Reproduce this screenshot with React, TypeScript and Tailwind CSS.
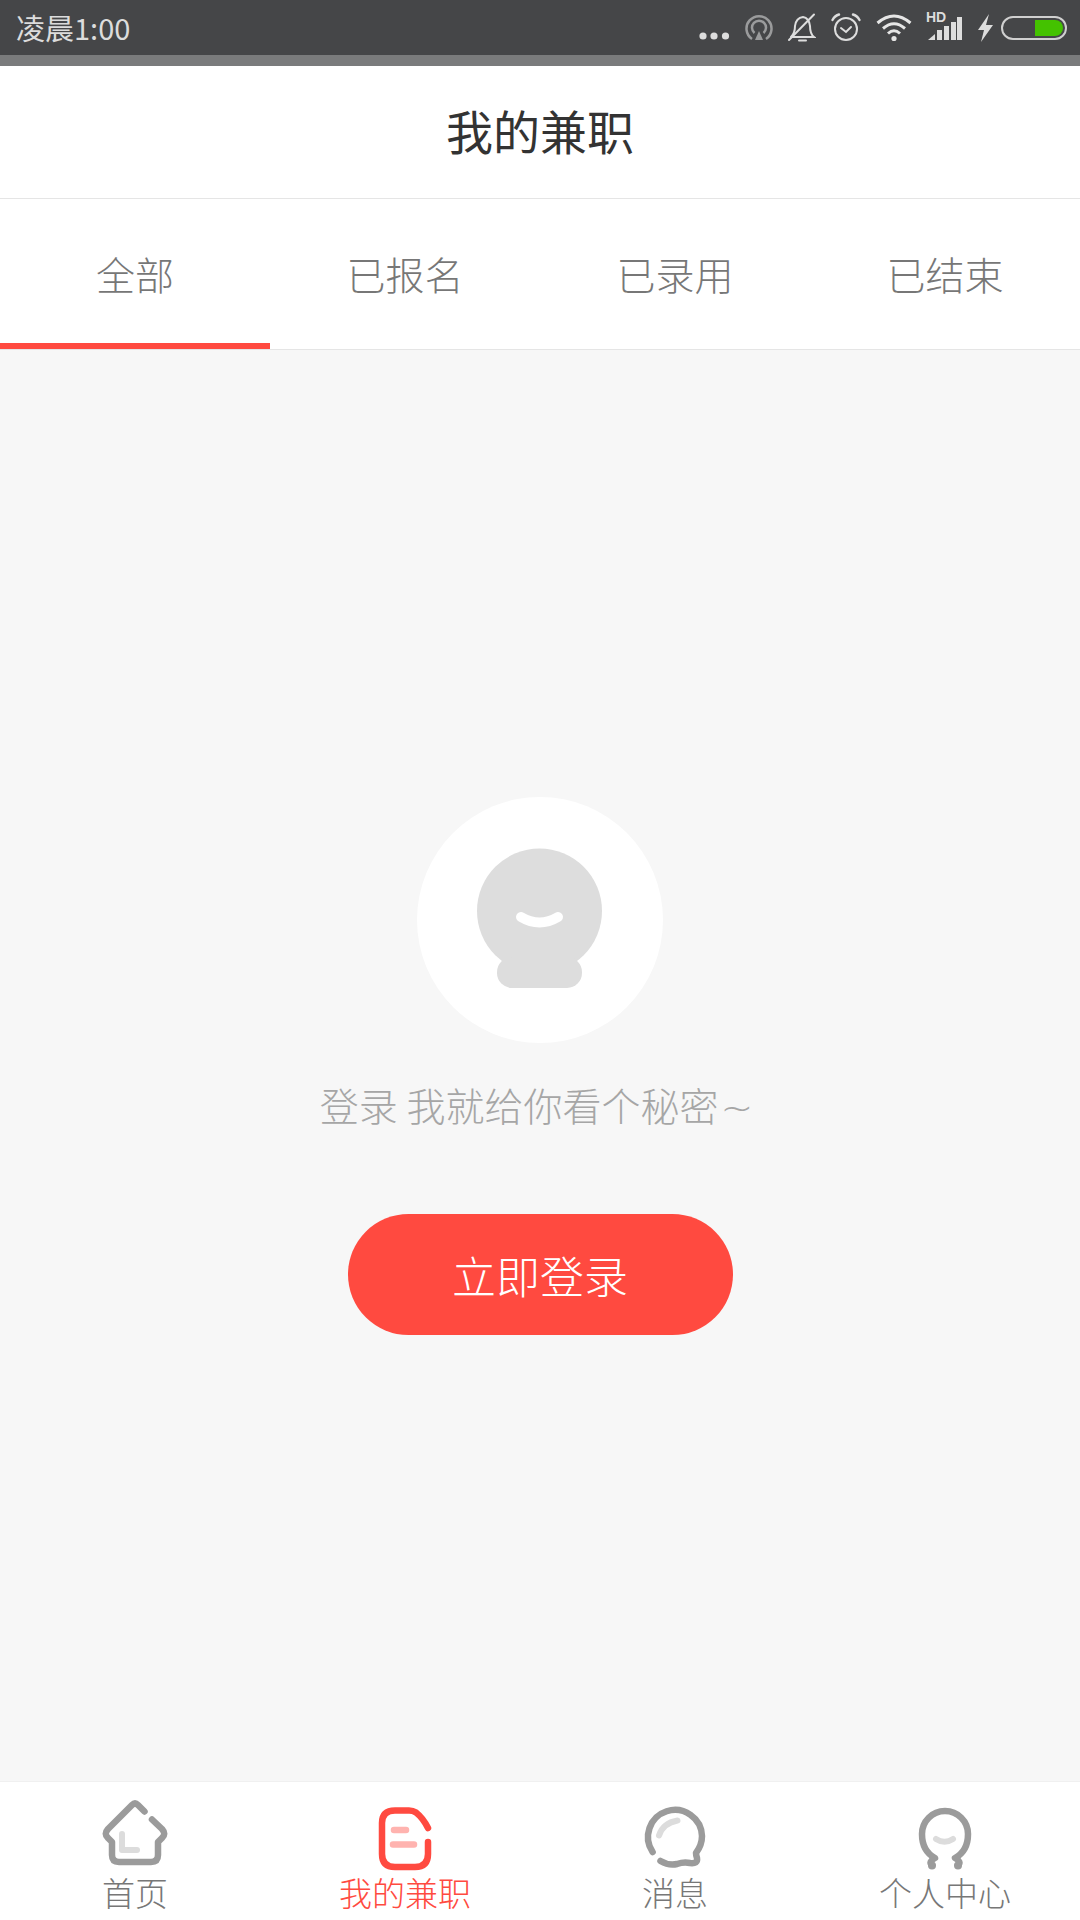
import React from 'react';

const FONT = '"Noto Sans CJK SC", "Noto Sans", sans-serif';

const tabs = ['全部', '已报名', '已录用', '已结束'];

// status bar icons
const Dots = () => (
  <svg width="32" height="30" viewBox="0 0 32 30" className="block">
    <circle cx="5" cy="23" r="3.6" fill="#ddd" />
    <circle cx="16" cy="23" r="3.6" fill="#ddd" />
    <circle cx="27.5" cy="23" r="3.6" fill="#ddd" />
  </svg>
);

const Cast = () => (
  <svg width="28" height="30" viewBox="0 0 28 30" className="block" fill="none" stroke="#9a9b9c">
    <path d="M7 26 A12.5 12.5 0 1 1 21 26" strokeWidth="2.5" />
    <path d="M9.5 20 A7 7 0 1 1 18.5 20" strokeWidth="2.5" />
    <path d="M14 18 L18 27 L10 27 Z" fill="#9a9b9c" stroke="none" />
  </svg>
);

const BellOff = () => (
  <svg width="29" height="30" viewBox="0 0 29 30" className="block" fill="none" stroke="#ddd" strokeWidth="2" strokeLinecap="round">
    <path d="M4 24 Q8 20 8 13 Q9 5 16 4 Q22 5 23 13 Q23 21 27 24 L5 24" />
    <path d="M12 27.5 L19 27.5" />
    <path d="M2 27 L27 1.5" />
  </svg>
);

const Alarm = () => (
  <svg width="30" height="30" viewBox="0 0 30 30" className="block" fill="none" stroke="#ddd" strokeWidth="2" strokeLinecap="round">
    <circle cx="15" cy="16" r="11" />
    <path d="M10 15 L15 19 L20 14" />
    <path d="M1.5 7 Q4 2.5 8 1.5 M28.5 7 Q26 2.5 22 1.5" strokeWidth="2.4" />
  </svg>
);

const Wifi = () => (
  <svg width="36" height="30" viewBox="0 0 36 30" className="block" fill="none" stroke="#e6e6e6" strokeWidth="3">
    <path d="M1.5 10 Q18 -4 34.5 10" />
    <path d="M7 15.5 Q18 6 29 15.5" />
    <path d="M12 20.5 Q18 15 24 20.5" />
    <circle cx="18" cy="25.5" r="2.6" fill="#e6e6e6" stroke="none" />
  </svg>
);

const Signal = () => (
  <div className="relative h-[30px] w-[36px]">
    <span className="absolute left-0 top-[-3px] text-[14px] font-bold leading-[15px] text-[#ddd]" style={{ fontFamily: '"Liberation Sans", sans-serif' }}>HD</span>
    <svg width="36" height="30" viewBox="0 0 36 30" className="absolute left-0 top-0" fill="#ddd">
      <path d="M2 27 L9 27 L9 21 Z" />
      <rect x="11" y="17" width="5" height="10" />
      <rect x="18" y="13" width="5" height="14" />
      <rect x="25" y="9" width="5" height="18" />
      <rect x="31" y="4" width="5" height="23" />
    </svg>
  </div>
);

const Bolt = () => (
  <svg width="15" height="30" viewBox="0 0 15 30" className="block" fill="#ddd">
    <path d="M11 1 L0 17 L6 17 L3 29 L15 12 L8 12 Z" />
  </svg>
);

const Battery = () => (
  <div className="relative h-[24px] w-[66px] rounded-full border-2 border-[#d0d0d0]">
    <div className="absolute bottom-[2px] right-[2px] top-[2px] w-[28px] rounded-r-full bg-[#44c200]" />
  </div>
);

// bottom nav icons, drawn in a 72x80 box
const HomeIcon = () => (
  <svg width="72" height="80" viewBox="0 0 72 80" fill="none" strokeWidth="6.5" strokeLinecap="round" strokeLinejoin="round">
    <path d="M45.5 14.5 L39 8 Q36 5 33 8 L9 32 Q4.5 37 9 41 L13 45 L13 58 Q13 65 20 65 L52 65 Q59 65 59 58 L59 45 L63 41 Q67.5 37 63 32 L53 22.5" stroke="#9b9b9b" />
    <path d="M23 37 L23 53 L38 53" stroke="#dcdcdc" strokeWidth="6" />
  </svg>
);

const JobIcon = () => (
  <svg width="72" height="80" viewBox="0 0 72 80" fill="none" strokeWidth="6.5" strokeLinecap="round" strokeLinejoin="round">
    <path d="M59 31 Q54 21 47 15.5 Q44 13.5 40 13.5 L26 13.5 Q13 13.5 13 26 L13 57 Q13 70 26 70 L46 70 Q59 70 59 57 L59 45" stroke="#ff4a40" />
    <path d="M25 33 L37 33 M24 47.5 L45 47.5" stroke="#ffb3af" />
  </svg>
);

const MessageIcon = () => (
  <svg width="72" height="80" viewBox="0 0 72 80" fill="none" strokeWidth="6.5" strokeLinecap="round" strokeLinejoin="round">
    <path d="M21.5 64 Q30 69 38 67 Q45 64.5 51 66 Q59 67 58 61 Q57 58 57 56 Q63 48 63 39 A27 27 0 1 0 13.6 55" stroke="#9b9b9b" />
    <path d="M20 38.5 Q24 26 38.5 23.5" stroke="#dcdcdc" strokeWidth="6" />
  </svg>
);

const PersonIcon = () => (
  <svg width="72" height="80" viewBox="0 0 72 80" fill="none" strokeWidth="6.5" strokeLinecap="round" strokeLinejoin="round">
    <path d="M23 68 Q19 65 26 61 Q13 54 13 37 A23 23 0 0 1 59 37 Q59 54 46 61 Q53 65 49 68" stroke="#9b9b9b" />
    <circle cx="23" cy="68.5" r="4" fill="#9b9b9b" />
    <circle cx="49" cy="68.5" r="4" fill="#9b9b9b" />
    <path d="M27 42 Q35.5 47.5 44 42" stroke="#dcdcdc" strokeWidth="6" />
  </svg>
);

const navItems = [
  { label: '首页', Icon: HomeIcon, active: false },
  { label: '我的兼职', Icon: JobIcon, active: true },
  { label: '消息', Icon: MessageIcon, active: false },
  { label: '个人中心', Icon: PersonIcon, active: false },
];

export default function App() {
  return (
    <div className="flex h-[1920px] w-[1080px] flex-col overflow-hidden bg-[#f7f7f7]" style={{ fontFamily: FONT }}>
      {/* status bar */}
      <div className="flex h-[55px] items-center justify-between bg-[#454648] pl-[16px] pr-[13px]">
        <span className="text-[29px] leading-[55px] text-[#dcdcdc]">凌晨1:00</span>
        <div className="flex items-center">
          <Dots />
          <div className="ml-[15px]"><Cast /></div>
          <div className="ml-[14px]"><BellOff /></div>
          <div className="ml-[15px]"><Alarm /></div>
          <div className="ml-[15px]"><Wifi /></div>
          <div className="ml-[14px]"><Signal /></div>
          <div className="ml-[16px]"><Bolt /></div>
          <div className="ml-[8px]"><Battery /></div>
        </div>
      </div>
      <div className="h-[11px] bg-[#7a7b7c]" />

      {/* title */}
      <div className="flex h-[133px] items-center justify-center border-b border-[#e5e5e5] bg-white pb-[4px]">
        <span className="text-[47px] text-[#333333]">我的兼职</span>
      </div>

      {/* tabs */}
      <div className="grid h-[151px] grid-cols-4 border-b border-[#e5e5e5] bg-white">
        {tabs.map((tab, i) => (
          <div key={tab} className={`flex items-center justify-center pt-[5px] text-[39px] font-light text-[#777777] ${i === 0 ? 'border-b-[6px] border-[#ff4a40]' : 'border-b-[6px] border-transparent'}`}>
            {tab}
          </div>
        ))}
      </div>

      {/* empty state */}
      <div className="flex flex-1 flex-col items-center pt-[447px]">
        <div className="h-[246px] w-[246px] rounded-full bg-white">
          <svg width="246" height="246" viewBox="0 0 246 246">
            <circle cx="122.5" cy="114" r="62.5" fill="#dddddd" />
            <rect x="80" y="160" width="85" height="31" rx="15" fill="#dddddd" />
            <path d="M104 120 Q122.5 131 141 120" fill="none" stroke="#ffffff" strokeWidth="10" strokeLinecap="round" />
          </svg>
        </div>
        <div className="mt-[33px] h-[56px] text-[39px] font-light leading-[56px] text-[#a6a6a6]">
          登录 我就给你看个秘密<span className="ml-[2px] mr-[7px] leading-none" style={{ fontFamily: '"DejaVu Sans", sans-serif' }}>~</span>
        </div>
        <button className="mt-[82px] flex h-[121px] w-[385px] items-center justify-center rounded-full bg-[#ff4a40] text-[44px] font-light text-white">
          立即登录
        </button>
      </div>

      {/* bottom nav */}
      <div className="grid h-[139px] grid-cols-4 border-t border-[#f0f0f0] bg-white">
        {navItems.map(({ label, Icon, active }) => (
          <div key={label} className="relative flex flex-col items-center pt-[15px]">
            <Icon />
            <span className={`absolute bottom-[6px] text-[33px] font-light leading-[44px] ${active ? 'text-[#ff4a40]' : 'text-[#777777]'}`}>{label}</span>
          </div>
        ))}
      </div>
    </div>
  );
}
